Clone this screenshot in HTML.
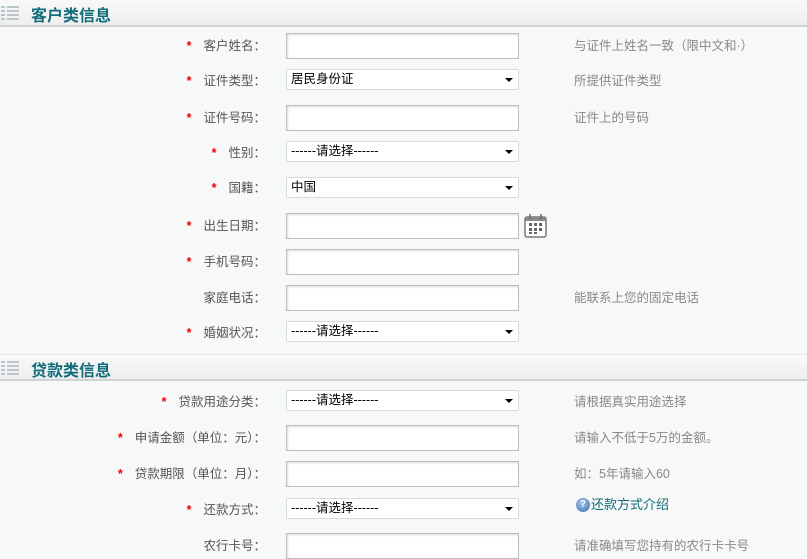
<!DOCTYPE html>
<html><head><meta charset="utf-8"><style>
*{margin:0;padding:0;box-sizing:border-box}
body{width:807px;height:557px;overflow:hidden;background:#f7f8f8;font-family:"Liberation Sans","Noto Sans CJK SC",sans-serif;font-size:12px;position:relative}
.hd{position:absolute;left:0;width:807px;height:27px;background:linear-gradient(#f9f9f9,#eeeeee);border-bottom:2px solid #cfd2d2}
.hd .ic{position:absolute;left:1px;top:6px;width:18px;height:14px;background:repeating-linear-gradient(#b7c7cc 0 2px,transparent 2px 4px)}
.hd .ic:after{content:"";position:absolute;left:4px;top:0;width:2px;height:14px;background:#f4f4f4}
.hd b{position:absolute;left:31px;top:2px;font-size:16px;color:#116d79;font-weight:bold}
.lab{position:absolute;right:547px;color:#555;font-size:12.5px;white-space:nowrap;line-height:16px;margin-right:-6px}
.lab i{color:#e00;font-style:normal;margin-right:12px;font-weight:bold}
.in{position:absolute;left:286px;width:233px;height:26px;background:#fff;border:1px solid #bdbdbd;box-shadow:inset 1px 1px 2px #ddd}
.se{position:absolute;left:286px;width:233px;height:21px;background:#fff;border:1px solid #d6dbe2;border-radius:2px;font-size:12.5px;color:#000;padding-left:4px;line-height:19px}
.se:after{content:"";position:absolute;right:5px;top:8px;border-left:4px solid transparent;border-right:4px solid transparent;border-top:4px solid #000}
.h{position:absolute;left:574px;color:#888;line-height:16px;font-size:12.5px}
</style></head><body>
<div class="hd" style="top:0"><span class="ic"></span><b>客户类信息</b></div>
<div class="hd" style="top:354px;border-top:1px solid #e4e4e4"><span class="ic"></span><b>贷款类信息</b></div>

<div class="lab" style="top:38px"><i>*</i>客户姓名：</div><div class="in" style="top:33px"></div><div class="h" style="top:38px">与证件上姓名一致（限中文和·）</div>
<div class="lab" style="top:73px"><i>*</i>证件类型：</div><div class="se" style="top:69px">居民身份证</div><div class="h" style="top:73px">所提供证件类型</div>
<div class="lab" style="top:110px"><i>*</i>证件号码：</div><div class="in" style="top:105px"></div><div class="h" style="top:110px">证件上的号码</div>
<div class="lab" style="top:145px"><i>*</i>性别：</div><div class="se" style="top:141px">------请选择------</div>
<div class="lab" style="top:180px"><i>*</i>国籍：</div><div class="se" style="top:177px">中国</div>
<div class="lab" style="top:218px"><i>*</i>出生日期：</div><div class="in" style="top:213px"></div>
<svg style="position:absolute;left:524px;top:213px" width="23" height="25" viewBox="0 0 23 25"><rect x="1" y="4" width="21" height="20" rx="2" fill="#fff" stroke="#777" stroke-width="1.5"/><rect x="1" y="4" width="21" height="4" fill="#888"/><path d="M6 1v5M17 1v5" stroke="#666" stroke-width="1.5"/><g fill="#666"><rect x="5" y="10" width="3" height="3"/><rect x="10" y="10" width="3" height="3"/><rect x="15" y="10" width="3" height="3"/><rect x="5" y="15" width="3" height="3"/><rect x="10" y="15" width="3" height="3"/><rect x="15" y="15" width="3" height="3"/><rect x="5" y="19" width="3" height="2"/><rect x="10" y="19" width="3" height="2"/></g></svg>
<div class="lab" style="top:254px"><i>*</i>手机号码：</div><div class="in" style="top:249px"></div>
<div class="lab" style="top:290px">家庭电话：</div><div class="in" style="top:285px"></div><div class="h" style="top:290px">能联系上您的固定电话</div>
<div class="lab" style="top:325px"><i>*</i>婚姻状况：</div><div class="se" style="top:321px">------请选择------</div>

<div class="lab" style="top:394px"><i>*</i>贷款用途分类：</div><div class="se" style="top:390px">------请选择------</div><div class="h" style="top:394px">请根据真实用途选择</div>
<div class="lab" style="top:430px"><i>*</i>申请金额（单位：元）：</div><div class="in" style="top:425px"></div><div class="h" style="top:430px">请输入不低于5万的金额。</div>
<div class="lab" style="top:466px"><i>*</i>贷款期限（单位：月）：</div><div class="in" style="top:461px"></div><div class="h" style="top:466px">如：5年请输入60</div>
<div class="lab" style="top:502px"><i>*</i>还款方式：</div><div class="se" style="top:498px">------请选择------</div>
<div style="position:absolute;left:576px;top:497px;color:#116d79;font-size:13px;line-height:16px;display:flex;align-items:center"><span style="display:inline-block;width:14px;height:14px;border-radius:7px;background:radial-gradient(circle at 40% 35%,#9fc3ea,#3d6fb3);color:#fff;font-size:10px;text-align:center;line-height:14px;font-weight:bold;margin-right:1px">?</span>还款方式介绍</div>
<div class="lab" style="top:538px">农行卡号：</div><div class="in" style="top:533px"></div><div class="h" style="top:538px">请准确填写您持有的农行卡卡号</div>
</body></html>
